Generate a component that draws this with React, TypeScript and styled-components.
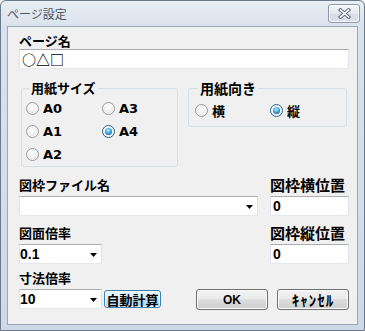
import React from "react";
import styled, { createGlobalStyle, css } from "styled-components";

const GlobalStyle = createGlobalStyle`
  html, body { margin: 0; padding: 0; }
  body { background: #f0f0f0; font-family: "Noto Sans CJK JP", sans-serif; }
`;

const JP = `"Noto Sans CJK JP", sans-serif`;
const LATIN = `"Liberation Sans", "Noto Sans CJK JP", sans-serif`;

const Window = styled.div`
  box-sizing: border-box;
  width: 365px;
  height: 331px;
  display: flex;
  flex-direction: column;
  border: 1px solid #6b7a8d;
  border-radius: 6px 6px 0 0;
  background: linear-gradient(180deg, #e9eef4 0px, #dae2ec 26px, #cfd9e5 100%);
  padding: 0 6px 5px;
`;

const TitleBar = styled.div`
  flex: none;
  height: 25px;
  display: flex;
  align-items: flex-start;
  justify-content: space-between;
`;

const Title = styled.span`
  font: 12px/16px ${JP};
  color: #4f545c;
  margin-top: 5px;
`;

const CloseButton = styled.div`
  box-sizing: border-box;
  width: 32px;
  height: 19px;
  margin: 3px -2px 0 0;
  border: 1px solid #8d99a9;
  border-radius: 3px;
  background: linear-gradient(#f3f6f9, #e2e8ef 50%, #d4dce6 51%, #dbe2eb);
  box-shadow: inset 0 0 0 1px rgba(255, 255, 255, 0.6);
  display: flex;
  align-items: center;
  justify-content: center;
`;

const Client = styled.div`
  flex: 1;
  border: 1px solid #9aa7b7;
  background: #f0f0f0;
  padding: 6px 8px 0 11px;
  display: flex;
  flex-direction: column;
`;

const Label = styled.div<{ $size?: number }>`
  font-family: ${JP};
  font-weight: bold;
  font-size: ${(p) => p.$size ?? 13}px;
  line-height: 16px;
  color: #000;
  white-space: nowrap;
`;

const fieldFrame = css`
  box-sizing: border-box;
  height: 20px;
  background: #fff;
  border: 1px solid #e2e3ea;
  border-top-color: #abadb3;
  border-bottom-color: #e3e9ef;
  margin: 0;
  outline: none;
  color: #000;
`;

const TextBox = styled.input<{ $cjk?: boolean; $width?: number }>`
  ${fieldFrame};
  width: ${(p) => (p.$width ? `${p.$width}px` : "100%")};
  padding: 0 2px;
  font-family: ${(p) => (p.$cjk ? JP : LATIN)};
  font-weight: bold;
  font-size: 14px;
`;

const Combo = styled.div<{ $width: number }>`
  ${fieldFrame};
  width: ${(p) => p.$width}px;
  display: flex;
  align-items: center;
  justify-content: space-between;
  padding: 0 4px 0 0;
  font: bold 14px/18px ${LATIN};
`;

const ComboArrow = () => (
  <svg width="7" height="4" viewBox="0 0 7 4" style={{ marginTop: 2 }}>
    <polygon points="0,0 7,0 3.5,4" fill="#000" />
  </svg>
);

const GroupRow = styled.div`
  display: flex;
  align-items: flex-start;
  gap: 10px;
  margin: 11px 0 0 2px;
`;

const Group = styled.fieldset<{ $width: number; $pad: string }>`
  box-sizing: border-box;
  width: ${(p) => p.$width}px;
  min-width: 0;
  margin: 0;
  padding: ${(p) => p.$pad};
  border: 1px solid #d5dfe5;
  border-radius: 3px;
`;

const Legend = styled.legend<{ $size?: number }>`
  margin-left: 3px;
  padding: 0 2px;
  font-family: ${JP};
  font-weight: bold;
  font-size: ${(p) => p.$size ?? 13}px;
  line-height: 16px;
  color: #000;
`;

const RadioGrid = styled.div<{ $col: number }>`
  display: grid;
  grid-template-columns: ${(p) => p.$col}px auto;
  grid-auto-rows: 23px;
`;

const RadioItem = styled.label`
  display: flex;
  align-items: center;
  gap: 4px;
  font-family: "DejaVu Sans", "Noto Sans CJK JP", sans-serif;
  font-weight: bold;
  font-size: 13px;
  color: #000;
`;

const RadioMark = styled.span<{ $checked?: boolean }>`
  flex: none;
  box-sizing: border-box;
  width: 13px;
  height: 13px;
  border-radius: 50%;
  border: 1px solid #9a9a9a;
  background: radial-gradient(circle at 50% 40%, #ffffff 0%, #f1f1f1 45%, #d2d2d2 100%);
  box-shadow: inset 0 0 0 1px #f8f8f8;
  display: flex;
  align-items: center;
  justify-content: center;
  ${(p) =>
    p.$checked &&
    css`
      border-color: #2c628b;
      &::after {
        content: "";
        width: 7px;
        height: 7px;
        border-radius: 50%;
        background: radial-gradient(circle at 45% 35%, #b8ecff 0%, #4fb1e6 40%, #135f98 85%, #0e3f6a 100%);
      }
    `}
`;

const Radio = ({ label, checked }: { label: string; checked?: boolean }) => (
  <RadioItem>
    <RadioMark $checked={checked} />
    {label}
  </RadioItem>
);

const FieldRow = styled.div<{ $top: number }>`
  display: flex;
  justify-content: space-between;
  margin-top: ${(p) => p.$top}px;
`;

const Field = styled.div<{ $width?: number }>`
  display: flex;
  flex-direction: column;
  gap: 3px;
  width: ${(p) => (p.$width ? `${p.$width}px` : "auto")};
`;

const Inline = styled.div`
  display: flex;
  align-items: center;
  gap: 2px;
`;

const ButtonBar = styled.div`
  align-self: flex-end;
  display: flex;
  gap: 9px;
  margin-bottom: -1px;
`;

const PushButton = styled.button<{ $hot?: boolean; $width: number; $height: number }>`
  box-sizing: border-box;
  width: ${(p) => p.$width}px;
  height: ${(p) => p.$height}px;
  margin: 0;
  padding: 0;
  border: 1px solid #707070;
  border-radius: 3px;
  background: linear-gradient(#f2f2f2 0%, #ebebeb 45%, #dddddd 50%, #cfcfcf 100%);
  box-shadow: inset 0 0 0 1px #fcfcfc;
  color: #000;
  font-family: ${LATIN};
  font-weight: bold;
  font-size: 13px;
  display: flex;
  align-items: center;
  justify-content: center;
  ${(p) =>
    p.$hot &&
    css`
      border-color: #3c7fb1;
      background: linear-gradient(#eaf6fd 0%, #d9f0fc 45%, #bee6fd 50%, #a7d9f5 100%);
      box-shadow: inset 0 0 0 1px #f4fbff;
    `}
`;

const ButtonText = styled.span<{ $spacing?: number; $size?: number }>`
  font-family: ${(p) => (p.$spacing !== undefined ? JP : "inherit")};
  font-size: ${(p) => p.$size ?? 13}px;
  letter-spacing: ${(p) => p.$spacing ?? 0}px;
`;

export default function App() {
  return (
    <>
      <GlobalStyle />
      <Window>
        <TitleBar>
          <Title>ページ設定</Title>
          <CloseButton>
            <svg width="13" height="11" viewBox="0 0 13 11">
              <path d="M2.5 2 L10.5 9 M10.5 2 L2.5 9" stroke="#5f6b7b" strokeWidth="3.6" strokeLinecap="square" />
              <path d="M2.5 2 L10.5 9 M10.5 2 L2.5 9" stroke="#ffffff" strokeWidth="1.6" strokeLinecap="square" />
            </svg>
          </CloseButton>
        </TitleBar>
        <Client>
          <Label>ページ名</Label>
          <TextBox $cjk value="○△□" readOnly />

          <GroupRow>
            <Group $width={157} $pad="1px 0 0 4px">
              <Legend>用紙サイズ</Legend>
              <RadioGrid $col={76}>
                <Radio label="A0" />
                <Radio label="A3" />
                <Radio label="A1" />
                <Radio label="A4" checked />
                <Radio label="A2" />
              </RadioGrid>
            </Group>
            <Group $width={159} $pad="3px 0 4px 6px">
              <Legend $size={14}>用紙向き</Legend>
              <RadioGrid $col={75}>
                <Radio label="横" />
                <Radio label="縦" checked />
              </RadioGrid>
            </Group>
          </GroupRow>

          <FieldRow $top={10}>
            <Field $width={239}>
              <Label>図枠ファイル名</Label>
              <Combo $width={239}>
                <span />
                <ComboArrow />
              </Combo>
            </Field>
            <Field $width={79}>
              <Label $size={15}>図枠横位置</Label>
              <TextBox value="0" readOnly />
            </Field>
          </FieldRow>

          <FieldRow $top={9}>
            <Field $width={239}>
              <Label>図面倍率</Label>
              <Combo $width={83}>
                <span>0.1</span>
                <ComboArrow />
              </Combo>
            </Field>
            <Field $width={79}>
              <Label $size={15}>図枠縦位置</Label>
              <TextBox value="0" readOnly />
            </Field>
          </FieldRow>

          <FieldRow $top={6}>
            <Field>
              <Label>寸法倍率</Label>
              <Inline>
                <Combo $width={83}>
                  <span>10</span>
                  <ComboArrow />
                </Combo>
                <PushButton $hot $width={57} $height={18}>
                  <ButtonText $spacing={0}>自動計算</ButtonText>
                </PushButton>
              </Inline>
            </Field>
            <ButtonBar>
              <PushButton $width={72} $height={21}>
                <ButtonText $size={12}>OK</ButtonText>
              </PushButton>
              <PushButton $width={72} $height={21}>
                <ButtonText $spacing={1} $size={15}>ｷｬﾝｾﾙ</ButtonText>
              </PushButton>
            </ButtonBar>
          </FieldRow>
        </Client>
      </Window>
    </>
  );
}
